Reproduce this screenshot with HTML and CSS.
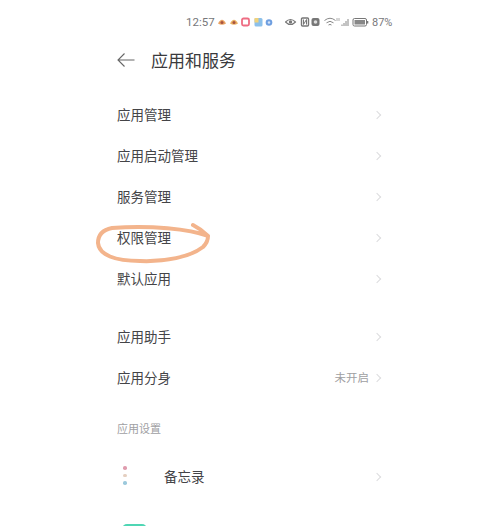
FILE: index.html
```html
<!DOCTYPE html>
<html lang="zh">
<head>
<meta charset="utf-8">
<title>应用和服务</title>
<link rel="stylesheet" href="styles.css">
</head>
<body>
<div class="phone">
  <div class="status">
    <span class="time">12:57</span>
    <svg class="sicons left" width="58" height="12" viewBox="0 0 58 12">
      <path d="M0 7.500Q4 0 8 7.500Q4 10 0 7.500Z" fill="#e9a262"/><circle cx="4" cy="6.500" r="1.500" fill="#a8523f"/>
      <path d="M12 7.500Q16 0 20 7.500Q16 10 12 7.500Z" fill="#e9b062"/><circle cx="16" cy="6.500" r="1.500" fill="#a8523f"/>
      <rect x="24" y="2.500" width="7" height="7" rx="1.500" fill="none" stroke="#ee6d83" stroke-width="1.800"/>
      <rect x="36.500" y="2" width="8" height="8.500" rx="1.500" fill="#8cc0ea"/><rect x="36.500" y="2" width="4" height="4.500" fill="#f0d27c"/>
      <circle cx="51" cy="6.500" r="3.300" fill="#6f9fe0"/><circle cx="51" cy="6.500" r="1.200" fill="#d5e3f6"/>
    </svg>
    <svg class="sicons right" width="84" height="12" viewBox="0 0 84 12">
      <path d="M0.500 6Q5.500 1 10.500 6Q5.500 11 0.500 6Z" fill="none" stroke="#777" stroke-width="1.100"/><circle cx="5.500" cy="6" r="1.700" fill="#777"/>
      <rect x="16.500" y="2" width="7" height="8" rx="1" fill="none" stroke="#777" stroke-width="1.400"/><path d="M18.500 3.500V8.500L21.500 3.500V8.500" stroke="#777" fill="none"/>
      <rect x="26.500" y="2" width="8" height="8" rx="2" fill="#777"/><circle cx="30.500" cy="6" r="1.800" fill="#ddd"/>
      <path d="M39.500 4.500Q45 0 50.500 4.500M41.500 6.800Q45 3.800 48.500 6.800M43.500 9Q45 7.800 46.500 9" fill="none" stroke="#888" stroke-width="1"/>
      <path d="M52 2V5M54 2V5" stroke="#999" stroke-width=".8"/>
      <path d="M57 10V8.500M59 10V7M61 10V5M63 10V3" stroke="#888" stroke-width="1"/>
      <rect x="68" y="2.500" width="13.500" height="7.500" rx="1.500" fill="none" stroke="#777"/><rect x="69.500" y="4" width="10.500" height="4.500" fill="#888"/><rect x="82" y="5" width="1.300" height="2.500" fill="#777"/>
    </svg>
    <span class="batt">87%</span>
  </div>

  <header class="title-bar">
    <svg class="back" width="18" height="14" viewBox="0 0 18 14"><path d="M7.500 0.500L1 7L7.500 13.500M1 7H17.500" fill="none" stroke="#666" stroke-width="1.100"/></svg>
    <h1 class="title">应用和服务</h1>
  </header>

  <ul class="group first">
    <li class="row"><span class="label">应用管理</span><i class="chev"></i></li>
    <li class="row"><span class="label">应用启动管理</span><i class="chev"></i></li>
    <li class="row"><span class="label">服务管理</span><i class="chev"></i></li>
    <li class="row"><span class="label">权限管理</span><i class="chev"></i></li>
    <li class="row"><span class="label">默认应用</span><i class="chev"></i></li>
  </ul>

  <ul class="group second">
    <li class="row"><span class="label">应用助手</span><i class="chev"></i></li>
    <li class="row"><span class="label">应用分身</span><span class="value">未开启</span><i class="chev"></i></li>
  </ul>

  <div class="section">应用设置</div>

  <div class="row app">
    <span class="dots"><b class="dot pink"></b><b class="dot sand"></b><b class="dot blue"></b></span>
    <span class="label">备忘录</span>
    <i class="chev"></i>
  </div>

  <div class="next-icon"></div>

  <svg class="scribble" width="126" height="56" viewBox="0 0 126 56">
    <path d="M103 10Q111 14 118 21C100 14 60 10 22 13C12 15 8 21 8 28C9 40 25 46 50 46C75 47 100 42 113 32C117 28 118 25 118 21" fill="none" stroke="#f3b48c" stroke-width="4" stroke-linecap="round" stroke-linejoin="round"/>
  </svg>
</div>
</body>
</html>
```
FILE: styles.css
```css
* { box-sizing: border-box; }
html, body { margin: 0; padding: 0; background: #fff; }
body { font-family: "Noto Sans CJK SC", "Liberation Sans", sans-serif; }
.phone {
  position: relative;
  width: 500px;
  height: 526px;
  overflow: hidden;
  padding: 0 115px 0 117px;
  color: #3a3a3c;
}
.status {
  display: flex;
  align-items: center;
  height: 14px;
  margin-top: 15px;
  margin-left: 69px;
  margin-right: -8px;
  font-family: "Roboto", "Liberation Sans", sans-serif;
  font-size: 11px;
  color: #77777a;
  white-space: nowrap;
}
.time { width: 32px; font-size: 11.500px; }
.sicons { flex: none; }
.sicons.left { margin-right: 9px; }
.sicons.right { margin-right: 3px; }
.title-bar {
  display: flex;
  align-items: center;
  height: 32px;
  margin-top: 15px;
}
.back { margin-right: 16px; }
.title { margin: 0; font-size: 17px; font-weight: 400; line-height: 24px; color: #3a3a3d; }
.group { list-style: none; margin: 0; padding: 0; }
.first { margin-top: 17px; }
.second { margin-top: 17px; }
.row {
  display: flex;
  align-items: center;
  height: 41px;
  font-size: 13.500px;
  color: #444447;
}
.label { flex: 1; }
.value { font-size: 11.500px; color: #a0a0a2; margin-right: 5px; }
.chev {
  flex: none;
  width: 6px;
  height: 6px;
  margin-right: 5px;
  border-top: 1px solid #dcdcde;
  border-right: 1px solid #dcdcde;
  transform: translateY(1px) rotate(45deg);
}
.section {
  margin-top: 21px;
  height: 20px;
  line-height: 20px;
  font-size: 11px;
  color: #a0a0a3;
}
.app { margin-top: 17px; }
.dots {
  flex: none;
  display: flex;
  flex-direction: column;
  gap: 4px;
  width: 47px;
  padding-left: 6px;
}
.dot { display: block; width: 3.500px; height: 3.500px; border-radius: 50%; }
.pink { background: #df9cae; }
.sand { background: #e5cfc0; }
.blue { background: #9cc9dc; }
.next-icon {
  width: 25px;
  height: 10px;
  margin: 28px 0 0 5px;
  background: #4fd6b4;
  border-radius: 5px 5px 0 0;
}
.scribble { position: absolute; left: 90px; top: 215px; }
```
